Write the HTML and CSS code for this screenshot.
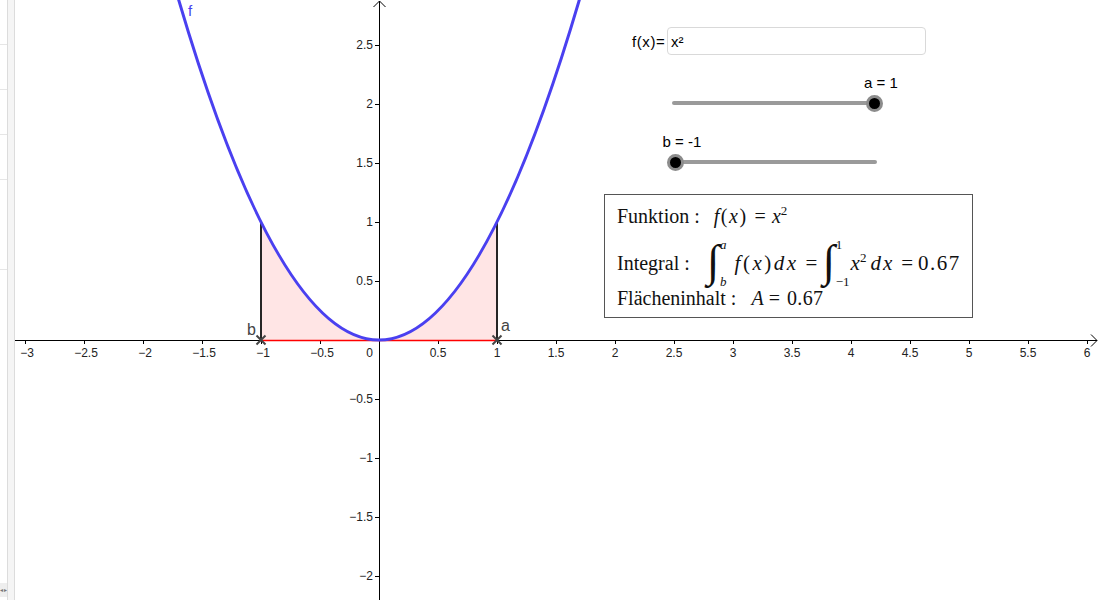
FILE: index.html
```html
<!DOCTYPE html>
<html lang="de">
<head>
<meta charset="utf-8">
<title>Integral – Fläche unter f</title>
<link rel="stylesheet" href="styles.css">
</head>
<body>
<div class="app">
  <aside class="sidebar">
    <div class="sidebar-tabs">
      <div class="tab tab-44"></div>
      <div class="tab tab-45"></div>
      <div class="tab tab-45"></div>
      <div class="tab tab-45"></div>
      <div class="tab tab-90"></div>
      <div class="tab-fill"></div>
      <div class="tab-arrows"><span>◂</span><span>▸</span></div>
    </div>
    <div class="sidebar-strip"></div>
  </aside>

  <main class="canvas">
    <svg class="graph" width="1085" height="600" viewBox="15 0 1085 600" xmlns="http://www.w3.org/2000/svg">
      <!-- area between f and x-axis from b to a -->
      <path class="area" d="M261,340 L261,222 Q379,458 497,222 L497,340 Z"/>

      <!-- axes -->
      <g class="axis">
        <line x1="15" y1="340.5" x2="1097" y2="340.5"/>
        <polyline points="1091,334.5 1097,340.5 1091,346.5"/>
        <line x1="379.5" y1="600" x2="379.5" y2="1"/>
        <polyline points="373.5,7 379.5,1 385.5,7"/>
      </g>

      <!-- x ticks -->
      <g class="ticks">
        <line x1="25.5" y1="340" x2="25.5" y2="344"/>
        <line x1="84.5" y1="340" x2="84.5" y2="344"/>
        <line x1="143.5" y1="340" x2="143.5" y2="344"/>
        <line x1="202.5" y1="340" x2="202.5" y2="344"/>
        <line x1="261.5" y1="340" x2="261.5" y2="344"/>
        <line x1="320.5" y1="340" x2="320.5" y2="344"/>
        <line x1="438.5" y1="340" x2="438.5" y2="344"/>
        <line x1="497.5" y1="340" x2="497.5" y2="344"/>
        <line x1="556.5" y1="340" x2="556.5" y2="344"/>
        <line x1="615.5" y1="340" x2="615.5" y2="344"/>
        <line x1="674.5" y1="340" x2="674.5" y2="344"/>
        <line x1="733.5" y1="340" x2="733.5" y2="344"/>
        <line x1="792.5" y1="340" x2="792.5" y2="344"/>
        <line x1="851.5" y1="340" x2="851.5" y2="344"/>
        <line x1="910.5" y1="340" x2="910.5" y2="344"/>
        <line x1="969.5" y1="340" x2="969.5" y2="344"/>
        <line x1="1028.5" y1="340" x2="1028.5" y2="344"/>
        <line x1="1087.5" y1="340" x2="1087.5" y2="344"/>
        <!-- y ticks -->
        <line x1="375" y1="45.5" x2="379" y2="45.5"/>
        <line x1="375" y1="104.5" x2="379" y2="104.5"/>
        <line x1="375" y1="163.5" x2="379" y2="163.5"/>
        <line x1="375" y1="222.5" x2="379" y2="222.5"/>
        <line x1="375" y1="281.5" x2="379" y2="281.5"/>
        <line x1="375" y1="399.5" x2="379" y2="399.5"/>
        <line x1="375" y1="458.5" x2="379" y2="458.5"/>
        <line x1="375" y1="517.5" x2="379" y2="517.5"/>
        <line x1="375" y1="576.5" x2="379" y2="576.5"/>
      </g>

      <!-- x labels -->
      <g class="tick-labels">
        <text x="27" y="357">−3</text>
        <text x="86" y="357">−2.5</text>
        <text x="145" y="357">−2</text>
        <text x="204" y="357">−1.5</text>
        <text x="263" y="357">−1</text>
        <text x="322" y="357">−0.5</text>
        <text x="438" y="357">0.5</text>
        <text x="497" y="357">1</text>
        <text x="556" y="357">1.5</text>
        <text x="615" y="357">2</text>
        <text x="674" y="357">2.5</text>
        <text x="733" y="357">3</text>
        <text x="792" y="357">3.5</text>
        <text x="851" y="357">4</text>
        <text x="910" y="357">4.5</text>
        <text x="969" y="357">5</text>
        <text x="1028" y="357">5.5</text>
        <text x="1087" y="357">6</text>
      </g>
      <g class="tick-labels y-labels">
        <text x="373" y="357">0</text>
        <text x="373" y="49">2.5</text>
        <text x="373" y="108">2</text>
        <text x="373" y="167">1.5</text>
        <text x="373" y="226">1</text>
        <text x="373" y="285">0.5</text>
        <text x="373" y="403">−0.5</text>
        <text x="373" y="462">−1</text>
        <text x="373" y="521">−1.5</text>
        <text x="373" y="580">−2</text>
      </g>

      <!-- bottom edge of integral region -->
      <line class="base-line" x1="261" y1="340.5" x2="497" y2="340.5"/>
      <!-- vertical boundaries -->
      <line class="bound" x1="261" y1="340" x2="261" y2="222"/>
      <line class="bound" x1="497" y1="340" x2="497" y2="222"/>

      <!-- function graph -->
      <path class="curve" d="M178.4,-1.02 Q379,681.02 579.6,-1.02"/>
      <text class="curve-label" x="188" y="16">f</text>

      <!-- points a and b -->
      <g class="point">
        <line x1="256.5" y1="335.5" x2="265.5" y2="344.5"/>
        <line x1="265.5" y1="335.5" x2="256.5" y2="344.5"/>
        <line x1="492.5" y1="335.5" x2="501.5" y2="344.5"/>
        <line x1="501.5" y1="335.5" x2="492.5" y2="344.5"/>
      </g>
      <text class="point-label" x="247" y="335">b</text>
      <text class="point-label" x="501" y="331">a</text>
    </svg>

    <div class="input-row">
      <label class="input-label">f(x)=</label>
      <div class="input-box">x²</div>
    </div>

    <div class="slider slider-a">
      <div class="slider-track">
        <div class="slider-rail">
          <div class="slider-thumb" style="left: 100%">
            <span class="slider-label">a = 1</span>
            <span class="knob"></span>
          </div>
        </div>
      </div>
    </div>

    <div class="slider slider-b">
      <div class="slider-track">
        <div class="slider-rail">
          <div class="slider-thumb" style="left: 0%">
            <span class="slider-label">b = -1</span>
            <span class="knob"></span>
          </div>
        </div>
      </div>
    </div>

    <div class="formula-box">
      <div class="f-row row-1">
        <span class="f-label">Funktion :</span>
        <span class="f-math"><span class="m fx"><i>f</i>(<i>x</i>)</span><span class="op">=</span><span class="m"><i>x</i><sup>2</sup></span></span>
      </div>
      <div class="f-row row-2">
        <span class="f-label">Integral :</span>
        <span class="f-math math-2"><span class="int-sign">∫</span><span class="limits"><i>a</i><i>b</i></span><span class="m fdx"><i>f</i>(<i>x</i>)<i>dx</i></span><span class="op">=</span><span class="int-sign">∫</span><span class="limits lim-num"><span>1</span><span>−1</span></span><span class="m x2"><i>x</i><sup>2</sup></span><span class="m dx"><i>dx</i></span><span class="op">=</span><span class="num">0.67</span></span>
      </div>
      <div class="f-row row-3">
        <span class="f-label">Flächeninhalt :</span>
        <span class="f-math"><span class="m"><i>A</i></span><span class="op">=</span><span class="num">0.67</span></span>
      </div>
    </div>
  </main>
</div>
</body>
</html>
```

FILE: styles.css
```css
html, body {
  margin: 0;
  padding: 0;
  background: #ffffff;
}

body {
  width: 1100px;
  height: 600px;
  overflow: hidden;
  font-family: "Liberation Sans", Arial, sans-serif;
}

.app {
  display: flex;
  width: 1100px;
  height: 600px;
}

/* ---------- left sidebar ---------- */
.sidebar {
  display: flex;
  flex: 0 0 15px;
  height: 600px;
}

.sidebar-tabs {
  display: flex;
  flex-direction: column;
  width: 7px;
  border-right: 1px solid #dcdcdc;
  background: #ffffff;
}

.tab {
  flex: 0 0 auto;
  box-sizing: border-box;
  border-bottom: 1px solid #e6e6e6;
}
.tab-44 { height: 45px; }
.tab-45 { height: 45px; }
.tab-90 { height: 90px; }

.tab-fill {
  flex: 1 1 auto;
}

.tab-arrows {
  display: flex;
  justify-content: space-between;
  align-items: center;
  height: 14px;
  margin-bottom: 3px;
  background: #eeeeee;
  font-size: 6px;
  line-height: 6px;
  color: #777777;
  overflow: hidden;
}

.sidebar-strip {
  width: 6px;
  background: #f5f5f5;
  border-right: 1px solid #dcdcdc;
}

/* ---------- graphics canvas ---------- */
.canvas {
  position: relative;
  flex: 1 1 auto;
  height: 600px;
  overflow: hidden;
  background: #ffffff;
}

.graph {
  display: block;
}

.area {
  fill: rgba(255, 0, 0, 0.1);
  stroke: none;
}

.axis line,
.axis polyline {
  stroke: #000000;
  stroke-width: 1;
  fill: none;
}

.ticks line {
  stroke: #000000;
  stroke-width: 1;
}

.tick-labels text {
  font-family: "Liberation Sans", Arial, sans-serif;
  font-size: 12px;
  fill: #222222;
  text-anchor: middle;
}

.y-labels text {
  text-anchor: end;
}

.base-line {
  stroke: #ff0000;
  stroke-width: 1.6;
}

.bound {
  stroke: #262626;
  stroke-width: 2;
}

.curve {
  fill: none;
  stroke: #4a40f0;
  stroke-width: 3;
}

.curve-label {
  font-family: "Liberation Sans", Arial, sans-serif;
  font-size: 15px;
  fill: #4a40f0;
}

.point line {
  stroke: #444444;
  stroke-width: 2;
}

.point-label {
  font-family: "Liberation Sans", Arial, sans-serif;
  font-size: 16px;
  fill: #444444;
}

/* ---------- input box ---------- */
.input-row {
  position: absolute;
  left: 617px;
  top: 27px;
  display: flex;
  align-items: center;
  font-size: 15px;
  color: #000000;
}

.input-label {
  width: 35px;
  letter-spacing: 0.6px;
}

.input-box {
  box-sizing: border-box;
  width: 259px;
  height: 28px;
  padding: 0 3px;
  display: flex;
  align-items: center;
  border: 1px solid #d9d9d9;
  border-radius: 4px;
  background: #ffffff;
}

/* ---------- sliders ---------- */
.slider {
  position: absolute;
  width: 205px;
}
.slider-a {
  left: 657px;
  top: 101px;
}
.slider-b {
  left: 657px;
  top: 160px;
}

.slider-track {
  position: relative;
  height: 4px;
  border-radius: 2px;
  background: #9a9a9a;
}

.slider-rail {
  position: absolute;
  left: 3px;
  right: 3px;
  top: 0;
  bottom: 0;
}

.slider-thumb {
  position: absolute;
  top: 50%;
  width: 0;
  height: 0;
}

.knob {
  position: absolute;
  left: -8.5px;
  top: -8.5px;
  box-sizing: border-box;
  width: 17px;
  height: 17px;
  border-radius: 50%;
  background: #000000;
  border: 3px solid #8c8c8c;
}

.slider-label {
  position: absolute;
  bottom: 12px;
  left: 7px;
  transform: translateX(-50%);
  white-space: nowrap;
  font-size: 15px;
  line-height: 16px;
  color: #000000;
}

/* ---------- formula text ---------- */
.formula-box {
  position: absolute;
  left: 589px;
  top: 194px;
  box-sizing: border-box;
  width: 369px;
  height: 124px;
  padding: 9px 0 0 12px;
  border: 1px solid #555555;
  background: #ffffff;
  font-family: "Liberation Serif", "Times New Roman", serif;
  font-size: 20px;
  color: #111111;
}

.f-row {
  display: flex;
  align-items: baseline;
  white-space: nowrap;
  line-height: 24px;
}

.f-math {
  margin-left: 14px;
}

.f-math i {
  font-style: italic;
}

.f-math sup {
  font-size: 13px;
  vertical-align: 8px;
  line-height: 0;
}

.op {
  margin: 0 6px 0 7px;
}

.fx {
  letter-spacing: 1.5px;
}

.row-1 {
  height: 24px;
}

.row-2 {
  height: 48px;
  margin-top: 10px;
}

.row-3 {
  height: 24px;
}

.row-3 .f-math {
  margin-left: 15px;
}

.row-3 .op {
  margin: 0 7px 0 5px;
}

/* integral row */
.math-2 {
  margin-left: 17px;
  font-size: 21px;
}

.int-sign {
  display: inline-block;
  font-size: 45px;
  line-height: 0;
  vertical-align: -6px;
}

.limits {
  display: inline-block;
  margin-left: 1px;
  font-size: 13px;
  line-height: 13px;
  vertical-align: -16px;
}

.limits > * {
  display: block;
}

.limits > *:last-child {
  margin-top: 24px;
}

.fdx {
  margin-left: 8px;
  letter-spacing: 2.5px;
}

.math-2 .op {
  margin: 0 5px 0 7px;
}

.x2 {
  margin-left: 1px;
}

.dx {
  margin-left: 4px;
  letter-spacing: 2px;
}

.num {
  letter-spacing: 0.4px;
}

.math-2 .num {
  letter-spacing: 1.5px;
}
```
